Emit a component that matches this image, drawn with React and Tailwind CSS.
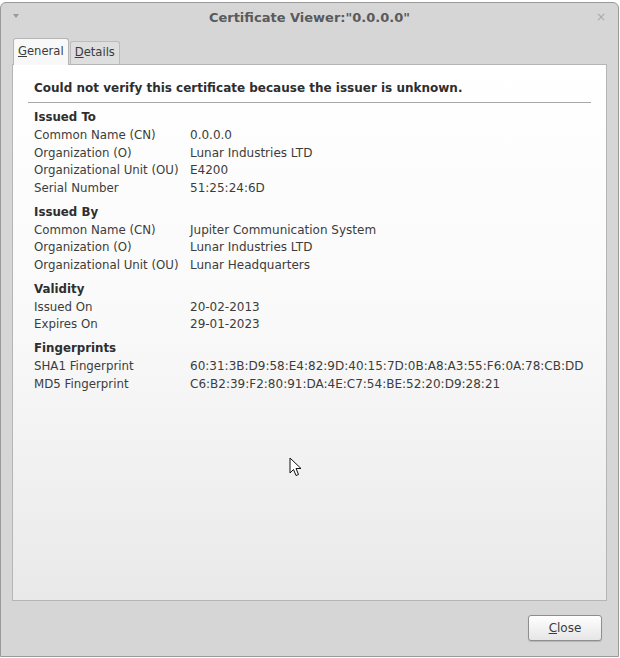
import React from "react";

const font = { fontFamily: '"DejaVu Sans", Verdana, sans-serif' };

function Section({ title, rows }) {
  return (
    <div className="mb-[6px]">
      <div className="font-bold text-[#2e2e2e] h-[17.75px] leading-[17.75px]">{title}</div>
      {rows.map(([k, v]) => (
        <div key={k} className="flex h-[17.75px] leading-[17.75px]">
          <div className="w-[156px] shrink-0">{k}</div>
          <div className="text-[12px]">{v}</div>
        </div>
      ))}
    </div>
  );
}

export default function App() {
  return (
    <div className="w-[620px] h-[658px] bg-white relative" style={font}>
      <div className="w-[619px] h-[655px] mt-[2px] border border-[#9a9a9a] rounded-t-[6px] bg-[#d6d6d6] flex flex-col overflow-hidden">
        {/* title bar */}
        <div className="h-[30px] flex items-center relative shrink-0">
          <div className="absolute left-[12px] top-[11px] w-0 h-0 border-l-[3px] border-r-[3px] border-t-[4px] border-l-transparent border-r-transparent border-t-[#9a9a9a]" />
          <div className="w-full text-center font-bold text-[13px] text-[#5a5a5a]">
            Certificate Viewer:"0.0.0.0"
          </div>
          <div className="absolute right-[12px] top-[8px] text-[#aaaaaa] text-[12px] leading-none">×</div>
        </div>
        {/* tabs */}
        <div className="flex items-end pl-[12px] h-[31px] shrink-0 text-[11.6px] text-[#3c3c3c]">
          <div className="h-[27px] px-[4px] border border-b-0 border-[#b5b5b5] rounded-t-[3px] bg-[#f8f8f8] flex items-center relative z-10 -mb-px pb-[1px]">
            <span><span className="underline">G</span>eneral</span>
          </div>
          <div className="h-[23px] ml-[1px] px-[4px] border border-b-0 border-[#bcbcbc] rounded-t-[3px] bg-[#dedede] flex items-center">
            <span><span className="underline">D</span>etails</span>
          </div>
        </div>
        {/* panel */}
        <div className="ml-[11px] w-[595px] h-[537px] border border-[#b5b5b5] bg-gradient-to-b from-[#ffffff] via-[#f9f9f9] to-[#e9e9e9] shrink-0 pl-[21px] pr-[15px] pt-[14px] text-[11.8px] text-[#3c3c3c]">
          <div className="font-bold text-[12px] text-[#2e2e2e] h-[18px] leading-[18px]">
            Could not verify this certificate because the issuer is unknown.
          </div>
          <div className="h-px bg-[#a8a8a8] mt-[5px] mb-[6px] -ml-[6px]" />
          <Section
            title="Issued To"
            rows={[
              ["Common Name (CN)", "0.0.0.0"],
              ["Organization (O)", "Lunar Industries LTD"],
              ["Organizational Unit (OU)", "E4200"],
              ["Serial Number", "51:25:24:6D"],
            ]}
          />
          <Section
            title="Issued By"
            rows={[
              ["Common Name (CN)", "Jupiter Communication System"],
              ["Organization (O)", "Lunar Industries LTD"],
              ["Organizational Unit (OU)", "Lunar Headquarters"],
            ]}
          />
          <Section
            title="Validity"
            rows={[
              ["Issued On", "20-02-2013"],
              ["Expires On", "29-01-2023"],
            ]}
          />
          <Section
            title="Fingerprints"
            rows={[
              ["SHA1 Fingerprint", "60:31:3B:D9:58:E4:82:9D:40:15:7D:0B:A8:A3:55:F6:0A:78:CB:DD"],
              ["MD5 Fingerprint", "C6:B2:39:F2:80:91:DA:4E:C7:54:BE:52:20:D9:28:21"],
            ]}
          />
        </div>
        {/* button row */}
        <div className="flex justify-end pr-[16px] pt-[14px]">
          <button className="w-[74px] h-[26px] rounded-[3px] border border-[#8e8e8e] bg-gradient-to-b from-[#ffffff] to-[#e6e6e6] text-[12px] text-[#3c3c3c] shadow-[0_1px_1px_rgba(0,0,0,0.15)]">
            <span className="underline">C</span>lose
          </button>
        </div>
      </div>
      {/* mouse cursor */}
      <svg className="absolute left-[289px] top-[455px]" width="14" height="20" viewBox="0 0 14 20">
        <path d="M1 1 L1 16 L4.5 12.5 L7 18.5 L9.5 17.5 L7 11.5 L12 11.5 Z" fill="#ffffff" stroke="#111111" strokeWidth="1" strokeLinejoin="round" />
      </svg>
    </div>
  );
}
